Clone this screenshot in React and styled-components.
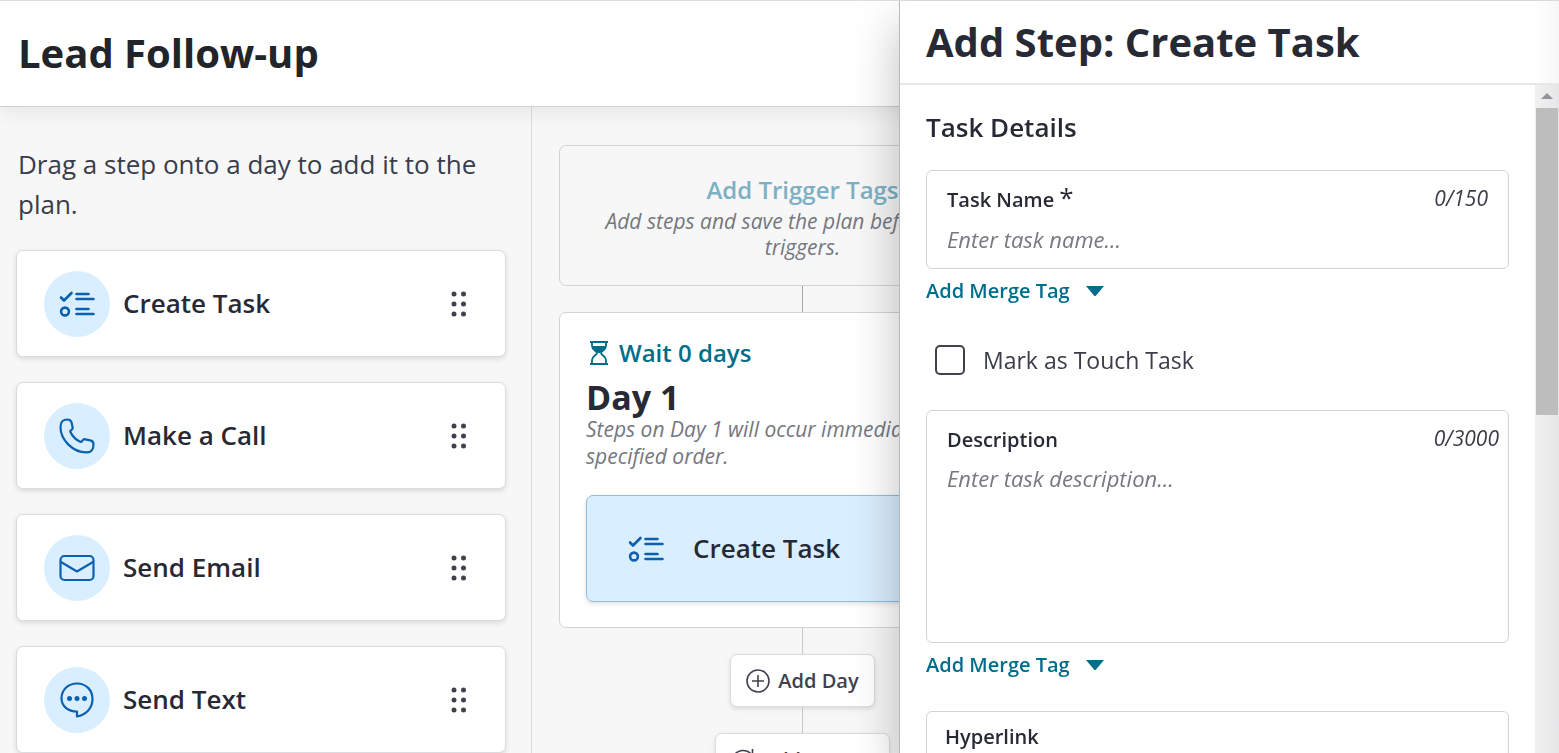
import { useState } from "react";
import styled, { createGlobalStyle, css } from "styled-components";

const GlobalStyle = createGlobalStyle`
  *, *::before, *::after {
    box-sizing: border-box;
  }

  body {
    margin: 0;
    overflow: hidden;
    font-family: "Open Sans", sans-serif;
    color: #272a35;
  }

  h1, h2, h3, p, ul {
    margin: 0;
    padding: 0;
  }

  button, input, textarea {
    font-family: inherit;
    color: inherit;
  }
`;

const Page = styled.div`
  display: flex;
  flex-direction: column;
  height: 100vh;
  overflow: hidden;
  background: #f7f7f7;
  border-top: 1px solid #dce0e4;
`;

const Header = styled.header`
  flex: none;
  padding: 23px 18px 25px;
  background: #fff;
  border-bottom: 1px solid #cfd0d3;
  box-shadow: 0 4px 20px rgba(0, 0, 0, 0.08);
  z-index: 1;
`;

const PageTitle = styled.h1`
  font-size: 40px;
  line-height: 57px;
  font-weight: 700;
  color: #212429;
`;

const Content = styled.div`
  display: flex;
  flex: 1;
  min-height: 0;
`;

const Sidebar = styled.aside`
  flex: none;
  width: 532px;
  padding: 37px 25px 0 16px;
  border-right: 1px solid #dddee0;
  overflow: hidden;
`;

const Hint = styled.p`
  padding: 0 2px;
  margin-bottom: 26px;
  font-size: 26px;
  line-height: 40px;
  color: #3a3d49;
`;

const StepList = styled.ul`
  display: flex;
  flex-direction: column;
  gap: 25px;
  list-style: none;
`;

const StepCard = styled.li`
  display: flex;
  align-items: center;
  height: 107px;
  padding: 0 38px 0 27px;
  background: #fff;
  border: 1px solid #dcdcde;
  border-radius: 7px;
  box-shadow: 0 2px 5px rgba(0, 0, 0, 0.12);
  cursor: grab;
`;

const IconCircle = styled.span`
  display: flex;
  align-items: center;
  justify-content: center;
  width: 66px;
  height: 66px;
  margin-right: 13px;
  border-radius: 50%;
  background: #d9eefe;
`;

const StepName = styled.span`
  flex: 1;
  padding-bottom: 2px;
  font-size: 26px;
  line-height: 40px;
  font-weight: 600;
`;

const Canvas = styled.main`
  flex: 1;
  padding: 38px 27px 0;
  overflow: hidden;
`;

const Timeline = styled.div`
  display: flex;
  flex-direction: column;
  align-items: center;
  width: 487px;
`;

const Connector = styled.div`
  width: 1px;
  height: 26px;
  background: ${(props) => (props.$dark ? "#a3a4a8" : "#c9c9cc")};
`;

const panel = css`
  width: 100%;
  border: 1px solid #d3d4d6;
  border-radius: 7px;
`;

const TriggerPanel = styled.section`
  ${panel}
  display: flex;
  flex-direction: column;
  align-items: center;
  padding: 26px 38px 25px;
`;

const TriggerButton = styled.button`
  padding: 0;
  border: 0;
  background: none;
  font-size: 24px;
  line-height: 36px;
  font-weight: 600;

  &:disabled {
    color: #7eb0c3;
  }
`;

const Note = styled.p`
  font-size: 21px;
  line-height: ${(props) => (props.$center ? "26px" : "27px")};
  font-style: italic;
  color: #757780;
  text-align: ${(props) => (props.$center ? "center" : "left")};
`;

const DayPanel = styled.section`
  ${panel}
  padding: 24px 26px 25px;
  background: #fff;
`;

const WaitButton = styled.button`
  display: flex;
  align-items: center;
  gap: 10px;
  padding: 0 3px;
  border: 0;
  background: none;
  font-size: 24px;
  line-height: 32px;
  font-weight: 600;
  color: #006d8a;
`;

const DayTitle = styled.h2`
  padding-top: 9px;
  font-size: 34px;
  line-height: 38px;
  font-weight: 700;
`;

const DayStep = styled.div`
  display: flex;
  align-items: center;
  gap: 29px;
  height: 107px;
  margin-top: 25px;
  padding: 0 41px;
  background: #d9eefe;
  border: 1px solid #8fbfe2;
  border-radius: 7px;
  box-shadow: 0 2px 5px rgba(0, 0, 0, 0.12);
`;

const AddButton = styled.button`
  display: flex;
  align-items: center;
  gap: 8px;
  height: 53px;
  padding: 0 15px;
  background: #fff;
  border: 1px solid #dcdcde;
  border-radius: 7px;
  box-shadow: 0 2px 5px rgba(0, 0, 0, 0.12);
  font-size: 20px;
  font-weight: 600;
  color: #3f424e;
`;

const Drawer = styled.aside`
  position: fixed;
  top: 1px;
  right: 0;
  bottom: 0;
  z-index: 2;
  display: flex;
  flex-direction: column;
  width: 660px;
  max-width: 100%;
  background: #fff;
  border-left: 1px solid #b9babd;
  box-shadow: 0 24px 44px rgba(0, 0, 0, 0.26);
`;

const DrawerHeader = styled.header`
  flex: none;
  padding: 13px 26px;
  background: linear-gradient(to right, #fff 96%, #f7f7f8);
  border-bottom: 2px solid #e7e7e8;
`;

const DrawerTitle = styled.h2`
  font-size: 40px;
  line-height: 56px;
  font-weight: 700;
`;

const DrawerBody = styled.div`
  display: flex;
  flex: 1;
  min-height: 0;
`;

const Form = styled.form`
  flex: 1;
  padding: 24px 26px;
  overflow-y: auto;
  scrollbar-width: none;
`;

const ScrollTrack = styled.div`
  display: flex;
  flex-direction: column;
  align-items: center;
  width: 24px;
  padding: 0 1px;
  background: linear-gradient(to right, #f1f1f1, #e6e6e8);
`;

const ScrollArrow = styled.span`
  margin: 8px 0 9px;
  border: 6px solid transparent;
  border-top: 0;
  border-bottom-color: #939498;
`;

const ScrollThumb = styled.div`
  width: 100%;
  height: 46%;
  background: #bdbdbe;
`;

const SectionTitle = styled.h3`
  margin-bottom: 25px;
  font-size: 26px;
  line-height: 36px;
  font-weight: 600;
`;

const Field = styled.div`
  display: grid;
  grid-template-columns: 1fr auto;
  padding: 12px 20px 7px;
  background: #fff;
  border: 1px solid #d3d4d6;
  border-radius: 6px;
`;

const FieldLabel = styled.label`
  font-size: 20px;
  line-height: 34px;
  font-weight: 600;
`;

const Required = styled.span`
  font-size: 26px;
  line-height: 0;
  font-weight: 400;
`;

const Counter = styled.span`
  margin-right: ${(props) => (props.$wide ? "-11px" : "0")};
  font-size: 21px;
  line-height: 30px;
  font-style: italic;
  color: #3a3d49;
`;

const control = css`
  grid-column: 1 / -1;
  width: 100%;
  padding: 0;
  border: 0;
  outline: 0;
  background: none;
  font-size: 22px;
  line-height: 32px;

  &::placeholder {
    font-style: italic;
    color: #777980;
    opacity: 1;
  }
`;

const TextInput = styled.input`
  ${control}
  height: 44px;
`;

const TextArea = styled.textarea`
  ${control}
  display: block;
  height: 178px;
  padding-top: 5px;
  resize: none;
`;

const MergeButton = styled.button`
  display: flex;
  align-items: center;
  gap: 16px;
  padding: 8px 0;
  border: 0;
  background: none;
  font-size: 20px;
  line-height: 28px;
  font-weight: 600;
  color: #006d8a;
`;

const CheckRow = styled.label`
  display: flex;
  align-items: center;
  gap: 18px;
  margin: 29px 0 32px 9px;
  font-size: 23px;
  line-height: 36px;
  color: #3a3d49;
`;

const Checkbox = styled.input`
  appearance: none;
  width: 30px;
  height: 30px;
  margin: 0;
  border: 2px solid #3f424e;
  border-radius: 5px;
  background: #fff;

  &:checked {
    background: #006d8a;
  }
`;

const HyperlinkField = styled(Field)`
  margin-top: 24px;
  padding-top: 8px;
  padding-left: 18px;
`;

const stroke = {
  fill: "none",
  stroke: "#0c60b0",
  strokeWidth: 2.2,
  strokeLinecap: "round",
  strokeLinejoin: "round",
};

function TaskIcon() {
  return (
    <svg width="36" height="36" viewBox="0 0 36 36" {...stroke} strokeWidth="2.6">
      <path d="M2 11.500l3 3 7.500-7.500M17.500 8h12M17.500 13h17M17.500 23h12M17.500 28h17" />
      <circle cx="6" cy="25.500" r="3.900" />
    </svg>
  );
}

function CallIcon() {
  return (
    <svg width="36" height="36" viewBox="0 0 36 36" {...stroke}>
      <path d="M1.500 9C1.500 4 4.500 1.500 8 1.500c3 0 4.200 1 4.700 3.500l1 5c.3 1.500-2.500 2-2.500 3.500 2 4.500 6 8.500 10.500 10.500 1.500 0 2-2.800 3.500-2.800l6 1.200c2.500.4 3.300 1.800 3.300 4 0 5-2.500 8-7 8C14 34.500 1.500 22 1.500 9z" />
    </svg>
  );
}

function EmailIcon() {
  return (
    <svg width="36" height="36" viewBox="0 0 36 36" {...stroke}>
      <rect x="1.500" y="6" width="33" height="24" rx="4" />
      <path d="M2 12l16 9.500L34 12" />
    </svg>
  );
}

function TextIcon() {
  return (
    <svg width="36" height="36" viewBox="0 0 36 36" {...stroke}>
      <path d="M18 34.500v-5C9 29.500 2.500 24 2.500 16.500 2.500 8 9 1.500 18 1.500S33.500 8 33.500 17C33.500 27 26 33 18 34.500z" />
      <g fill="#0c60b0" stroke="none">
        <circle cx="10.500" cy="16.500" r="2.500" />
        <circle cx="18" cy="16.500" r="2.500" />
        <circle cx="25.500" cy="16.500" r="2.500" />
      </g>
    </svg>
  );
}

function GripIcon() {
  return (
    <svg width="17" height="26" viewBox="0 0 17 26" fill="#3f424e">
      {[3, 13, 23].map((y) => (
        <g key={y}>
          <circle cx="4" cy={y} r="2.500" />
          <circle cx="13.500" cy={y} r="2.500" />
        </g>
      ))}
    </svg>
  );
}

function HourglassIcon() {
  return (
    <svg width="20" height="24" viewBox="0 0 20 24" fill="none" stroke="#006d8a" strokeWidth="1.800">
      <path d="M1 1h18M1 23h18M3 1v4c0 4 5 5 5 7s-5 3-5 7v4M17 1v4c0 4-5 5-5 7s5 3 5 7v4" />
      <path d="M3 5h14c0 3-5 5-6 7H9c-1-2-6-4-6-7z" fill="#006d8a" stroke="none" />
    </svg>
  );
}

function PlusCircleIcon() {
  return (
    <svg width="24" height="24" viewBox="0 0 24 24" fill="none" stroke="#3f424e" strokeWidth="1.600">
      <circle cx="12" cy="12" r="11" />
      <path d="M12 6v12M6 12h12" />
    </svg>
  );
}

function RepeatIcon() {
  return (
    <svg width="24" height="24" viewBox="0 0 24 24" fill="none" stroke="#3f424e" strokeWidth="1.600">
      <path d="M21.500 1v6h-6M21 7A11 11 0 1 0 23 12" />
    </svg>
  );
}

function CaretIcon() {
  return (
    <svg width="18" height="10" viewBox="0 0 18 10" fill="#006d8a">
      <path d="M0 0h18l-8 9.500q-1 1-2 0z" />
    </svg>
  );
}

const steps = [
  { name: "Create Task", Icon: TaskIcon },
  { name: "Make a Call", Icon: CallIcon },
  { name: "Send Email", Icon: EmailIcon },
  { name: "Send Text", Icon: TextIcon },
];

function AddStepDrawer() {
  const [name, setName] = useState("");
  const [description, setDescription] = useState("");

  return (
    <Drawer>
      <DrawerHeader>
        <DrawerTitle>Add Step: Create Task</DrawerTitle>
      </DrawerHeader>
      <DrawerBody>
        <Form>
          <SectionTitle>Task Details</SectionTitle>
          <Field>
            <FieldLabel htmlFor="task-name">
              Task Name <Required>*</Required>
            </FieldLabel>
            <Counter>{name.length}/150</Counter>
            <TextInput
              id="task-name"
              placeholder="Enter task name..."
              maxLength={150}
              value={name}
              onChange={(e) => setName(e.target.value)}
            />
          </Field>
          <MergeButton type="button">
            Add Merge Tag <CaretIcon />
          </MergeButton>
          <CheckRow>
            <Checkbox type="checkbox" />
            Mark as Touch Task
          </CheckRow>
          <Field>
            <FieldLabel htmlFor="description">Description</FieldLabel>
            <Counter $wide>{description.length}/3000</Counter>
            <TextArea
              id="description"
              placeholder="Enter task description..."
              maxLength={3000}
              value={description}
              onChange={(e) => setDescription(e.target.value)}
            />
          </Field>
          <MergeButton type="button">
            Add Merge Tag <CaretIcon />
          </MergeButton>
          <HyperlinkField>
            <FieldLabel htmlFor="hyperlink">Hyperlink</FieldLabel>
            <TextInput id="hyperlink" />
          </HyperlinkField>
        </Form>
        <ScrollTrack>
          <ScrollArrow />
          <ScrollThumb />
        </ScrollTrack>
      </DrawerBody>
    </Drawer>
  );
}

function App() {
  return (
    <>
      <GlobalStyle />
      <Page>
        <Header>
          <PageTitle>Lead Follow-up</PageTitle>
        </Header>
        <Content>
          <Sidebar>
            <Hint>Drag a step onto a day to add it to the plan.</Hint>
            <StepList>
              {steps.map(({ name, Icon }) => (
                <StepCard key={name}>
                  <IconCircle>
                    <Icon />
                  </IconCircle>
                  <StepName>{name}</StepName>
                  <GripIcon />
                </StepCard>
              ))}
            </StepList>
          </Sidebar>
          <Canvas>
            <Timeline>
              <TriggerPanel>
                <TriggerButton disabled>Add Trigger Tags</TriggerButton>
                <Note $center>Add steps and save the plan before adding triggers.</Note>
              </TriggerPanel>
              <Connector $dark />
              <DayPanel>
                <WaitButton>
                  <HourglassIcon /> Wait 0 days
                </WaitButton>
                <DayTitle>Day 1</DayTitle>
                <Note>Steps on Day 1 will occur immediately in the specified order.</Note>
                <DayStep>
                  <TaskIcon />
                  <StepName>Create Task</StepName>
                </DayStep>
              </DayPanel>
              <Connector />
              <AddButton>
                <PlusCircleIcon /> Add Day
              </AddButton>
              <Connector />
              <AddButton>
                <RepeatIcon /> Add Repeat
              </AddButton>
            </Timeline>
          </Canvas>
        </Content>
      </Page>
      <AddStepDrawer />
    </>
  );
}

export default App;
